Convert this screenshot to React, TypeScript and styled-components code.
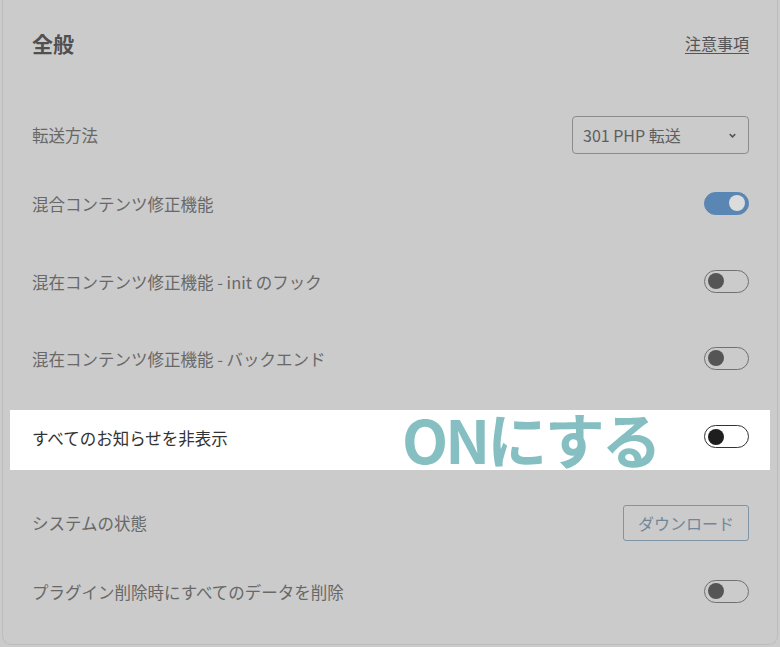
import React from "react";
import styled, { createGlobalStyle } from "styled-components";

const GlobalStyle = createGlobalStyle`
  html, body {
    margin: 0;
    padding: 0;
    background: #cbcbcb;
  }
  body {
    font-family: "Noto Sans CJK JP", "Noto Sans", sans-serif;
  }
`;

const Card = styled.div`
  box-sizing: border-box;
  margin: 0 2px;
  height: 645px;
  border: 1px solid #bdbdbd;
  border-top: none;
  border-radius: 0 0 9px 9px;
  background: #cbcbcb;
  padding: 0 7px;
`;

const Header = styled.div`
  height: 86px;
  display: flex;
  align-items: center;
  justify-content: space-between;
  padding: 0 21px 0 22px;
  h1 {
    margin: 0;
    font-size: 21px;
    font-weight: 700;
    color: #505050;
  }
  a {
    font-size: 16px;
    color: #555;
    text-decoration: underline;
    text-underline-offset: 3px;
  }
`;

const Row = styled.div<{ $top: number; $highlight?: boolean }>`
  position: relative;
  box-sizing: border-box;
  height: 60px;
  margin-top: ${(p) => p.$top}px;
  display: flex;
  align-items: center;
  justify-content: space-between;
  padding: 0 21px ${(p) => (p.$highlight ? "5px" : "0")} 22px;
  background: ${(p) => (p.$highlight ? "#ffffff" : "transparent")};
`;

const Label = styled.span<{ $dark?: boolean }>`
  font-size: 16.5px;
  color: ${(p) => (p.$dark ? "#333" : "#686868")};
`;

const Select = styled.div`
  box-sizing: border-box;
  width: 177px;
  height: 38px;
  border: 1px solid #8c8c8c;
  border-radius: 4px;
  display: flex;
  align-items: center;
  justify-content: space-between;
  padding: 0 10px 0 10px;
  font-size: 16px;
  color: #5e5e5e;
`;

const Toggle = styled.div<{ $on?: boolean; $dark?: boolean }>`
  position: relative;
  box-sizing: border-box;
  width: 45px;
  height: 23px;
  border-radius: 12px;
  border: 1.5px solid
    ${(p) => (p.$on ? "#5a86b4" : p.$dark ? "#333" : "#707070")};
  background: ${(p) => (p.$on ? "#5a86b4" : p.$dark ? "#fff" : "transparent")};
  margin-top: -2px;
  &::after {
    content: "";
    position: absolute;
    top: 50%;
    transform: translateY(-50%);
    width: 16px;
    height: 16px;
    border-radius: 50%;
    ${(p) => (p.$on ? "right: 3px;" : "left: 3px;")}
    background: ${(p) => (p.$on ? "#dcdcdc" : p.$dark ? "#1e1e1e" : "#555")};
  }
`;

const Button = styled.div`
  box-sizing: border-box;
  width: 126px;
  height: 36px;
  border: 1px solid #7f94a5;
  border-radius: 3px;
  display: flex;
  align-items: center;
  justify-content: center;
  font-size: 16px;
  color: #70879a;
`;

const Annotation = styled.span`
  position: absolute;
  left: 392px;
  top: 30px;
  transform: translateY(-53%);
  font-size: 60px;
  font-weight: 700;
  letter-spacing: -3px;
  line-height: 1;
  color: #85bfc1;
  white-space: nowrap;
`;

const Chevron = () => (
  <svg width="11" height="11" viewBox="0 0 12 12">
    <path d="M3 4.5 L6 7.5 L9 4.5" fill="none" stroke="#555" strokeWidth="1.6" />
  </svg>
);

const App = () => {
  return (
    <>
      <GlobalStyle />
      <Card>
        <Header>
          <h1>全般</h1>
          <a>注意事項</a>
        </Header>
        <Row $top={19}>
          <Label>転送方法</Label>
          <Select>
            <span>301 PHP 転送</span>
            <Chevron />
          </Select>
        </Row>
        <Row $top={9}>
          <Label>混合コンテンツ修正機能</Label>
          <Toggle $on />
        </Row>
        <Row $top={18}>
          <Label>混在コンテンツ修正機能 - init のフック</Label>
          <Toggle />
        </Row>
        <Row $top={17}>
          <Label>混在コンテンツ修正機能 - バックエンド</Label>
          <Toggle />
        </Row>
        <Row $top={21} $highlight>
          <Label $dark>すべてのお知らせを非表示</Label>
          <Annotation>ONにする</Annotation>
          <Toggle $dark />
        </Row>
        <Row $top={23}>
          <Label>システムの状態</Label>
          <Button>ダウンロード</Button>
        </Row>
        <Row $top={9}>
          <Label>プラグイン削除時にすべてのデータを削除</Label>
          <Toggle />
        </Row>
      </Card>
    </>
  );
};

export default App;
